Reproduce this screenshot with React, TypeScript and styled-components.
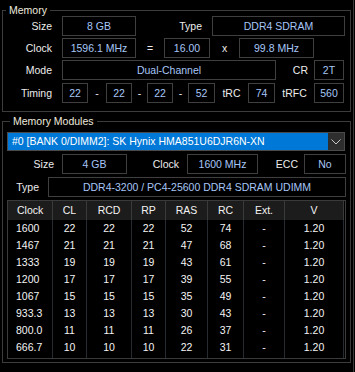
import React from "react";
import styled, { createGlobalStyle } from "styled-components";

const GlobalStyle = createGlobalStyle`
  * { box-sizing: border-box; }
  html, body { margin: 0; padding: 0; background: #000; }
  body {
    font-family: "Liberation Sans", Arial, sans-serif;
    font-size: 10.5px;
    color: #ececec;
  }
`;

const timings = [
  ["1600", "22", "22", "22", "52", "74", "-", "1.20"],
  ["1467", "21", "21", "21", "47", "68", "-", "1.20"],
  ["1333", "19", "19", "19", "43", "61", "-", "1.20"],
  ["1200", "17", "17", "17", "39", "55", "-", "1.20"],
  ["1067", "15", "15", "15", "35", "49", "-", "1.20"],
  ["933.3", "13", "13", "13", "30", "43", "-", "1.20"],
  ["800.0", "11", "11", "11", "26", "37", "-", "1.20"],
  ["666.7", "10", "10", "10", "22", "31", "-", "1.20"],
];

const headers = ["Clock", "CL", "RCD", "RP", "RAS", "RC", "Ext.", "V"];

function App() {
  return (
    <>
      <GlobalStyle />
      <Page>
        <Group $top={3} $pad={0}>
          <Legend>Memory</Legend>
          <Rows>
            <Row>
              <Label $w={59}>Size</Label>
              <Value $w={74}>8 GB</Value>
              <Label $w={76}>Type</Label>
              <Value $w={133}>DDR4 SDRAM</Value>
            </Row>
            <Row>
              <Label $w={59}>Clock</Label>
              <Value $w={74}>1596.1 MHz</Value>
              <Sym $w={28}>=</Sym>
              <Value $w={46}>16.00</Value>
              <Sym $w={29}>x</Sym>
              <Value $w={75}>99.8 MHz</Value>
            </Row>
            <Row>
              <Label $w={59}>Mode</Label>
              <Value $w={214}>Dual-Channel</Value>
              <Label $w={38} $pad={6}>CR</Label>
              <Value $w={30}>2T</Value>
            </Row>
            <Row $extra={1}>
              <Label $w={59}>Timing</Label>
              <Value $w={26}>22</Value>
              <Sym $w={18}>-</Sym>
              <Value $w={26}>22</Value>
              <Sym $w={15}>-</Sym>
              <Value $w={26}>22</Value>
              <Sym $w={15}>-</Sym>
              <Value $w={27}>52</Value>
              <Sym $w={33}>tRC</Sym>
              <Value $w={27}>74</Value>
              <Sym $w={39}>tRFC</Sym>
              <Value $w={30}>560</Value>
            </Row>
          </Rows>
        </Group>

        <Group $top={2} $pad={4}>
          <Legend>Memory Modules</Legend>
          <ModuleBody>
            <Select>
              <SelectText>#0 [BANK 0/DIMM2]: SK Hynix HMA851U6DJR6N-XN</SelectText>
              <SelectArrow>
                <svg width="10" height="6" viewBox="0 0 10 6">
                  <polyline points="0.5,0.5 5,5 9.5,0.5" fill="none" stroke="#c8c8c8" strokeWidth="1" />
                </svg>
              </SelectArrow>
            </Select>
            <Row>
              <Label $w={55} $pad={8}>Size</Label>
              <Value $w={65}>4 GB</Value>
              <Label $w={60} $pad={8}>Clock</Label>
              <Value $w={71}>1600 MHz</Value>
              <Label $w={46} $pad={6}>ECC</Label>
              <Value $w={42}>No</Value>
            </Row>
            <Row>
              <Label $w={41} $pad={9}>Type</Label>
              <Value $w={298}>DDR4-3200 / PC4-25600 DDR4 SDRAM UDIMM</Value>
            </Row>
            <TableFrame>
              <TableGrid>
                {headers.map((h, i) => (
                  <HeadCell key={h} $left={i === 0}>
                    {h}
                  </HeadCell>
                ))}
                {timings.map((row) =>
                  row.map((v, i) => (
                    <Cell key={row[0] + "-" + i} $left={i === 0}>
                      {v}
                    </Cell>
                  ))
                )}
              </TableGrid>
            </TableFrame>
          </ModuleBody>
        </Group>
      </Page>
    </>
  );
}

export default App;

const Page = styled.div`
  width: 354px;
  min-height: 372px;
  padding-left: 2px;
  border-right: 1px solid #3a3a3a;
  overflow: hidden;
`;

const Group = styled.fieldset<{ $top: number; $pad: number }>`
  width: 349px;
  min-width: 0;
  margin: ${(p) => p.$top}px 0 0 0;
  padding: 0 ${(p) => p.$pad}px ${(p) => (p.$pad ? 3 : 8)}px;
  border: 1px solid #3c3c3c;
`;

const Legend = styled.legend`
  margin-left: 3px;
  padding: 0 3px;
  height: 14px;
  line-height: 14px;
  color: #eeeadf;
`;

const Rows = styled.div`
  display: flex;
  flex-direction: column;
  gap: 2px;
  margin-top: -1px;
`;

const ModuleBody = styled.div`
  display: flex;
  flex-direction: column;
  gap: 3px;
  padding-top: 4px;
`;

const Row = styled.div<{ $extra?: number }>`
  display: flex;
  height: 20px;
  align-items: center;
  margin-top: ${(p) => p.$extra || 0}px;
`;

const Label = styled.div<{ $w: number; $pad?: number }>`
  width: ${(p) => p.$w}px;
  flex: none;
  text-align: right;
  padding-right: ${(p) => p.$pad ?? 10}px;
  color: #ececec;
  white-space: nowrap;
`;

const Sym = styled.div<{ $w: number }>`
  width: ${(p) => p.$w}px;
  flex: none;
  text-align: center;
  color: #ececec;
  white-space: nowrap;
`;

const Value = styled.div<{ $w: number }>`
  width: ${(p) => p.$w}px;
  flex: none;
  height: 20px;
  line-height: 18px;
  border: 1px solid #3f3f3f;
  text-align: center;
  color: #a7c6f7;
  white-space: nowrap;
  overflow: hidden;
`;

const Select = styled.div`
  display: flex;
  height: 19px;
  margin-right: 1px;
  border: 1px solid #4a4a4a;
  background: #0078d7;
`;

const SelectText = styled.div`
  flex: 1;
  padding-left: 4px;
  line-height: 17px;
  color: #ffffff;
  white-space: nowrap;
`;

const SelectArrow = styled.div`
  width: 16px;
  display: flex;
  align-items: center;
  justify-content: center;
  background: #2e2e2e;
`;

const TableFrame = styled.div`
  border: 1px solid #3a3a3a;
  padding-right: 1px;
`;

const TableGrid = styled.div`
  display: grid;
  grid-template-columns: 45px 34px 45px 34px 42px 36px 41px 59px;
  grid-template-rows: 19px repeat(7, 17px) 19px;
`;

const HeadCell = styled.div<{ $left: boolean }>`
  background: #1c1c1c;
  border-right: 1px solid #3a3a3a;
  line-height: 19px;
  text-align: ${(p) => (p.$left ? "left" : "center")};
  padding-left: ${(p) => (p.$left ? 9 : 0)}px;
  color: #f2f2f2;
`;

const Cell = styled.div<{ $left: boolean }>`
  border-right: 1px solid #262a31;
  line-height: 17px;
  text-align: ${(p) => (p.$left ? "left" : "center")};
  padding-left: ${(p) => (p.$left ? 8 : 0)}px;
  color: #f4f4f4;
`;
